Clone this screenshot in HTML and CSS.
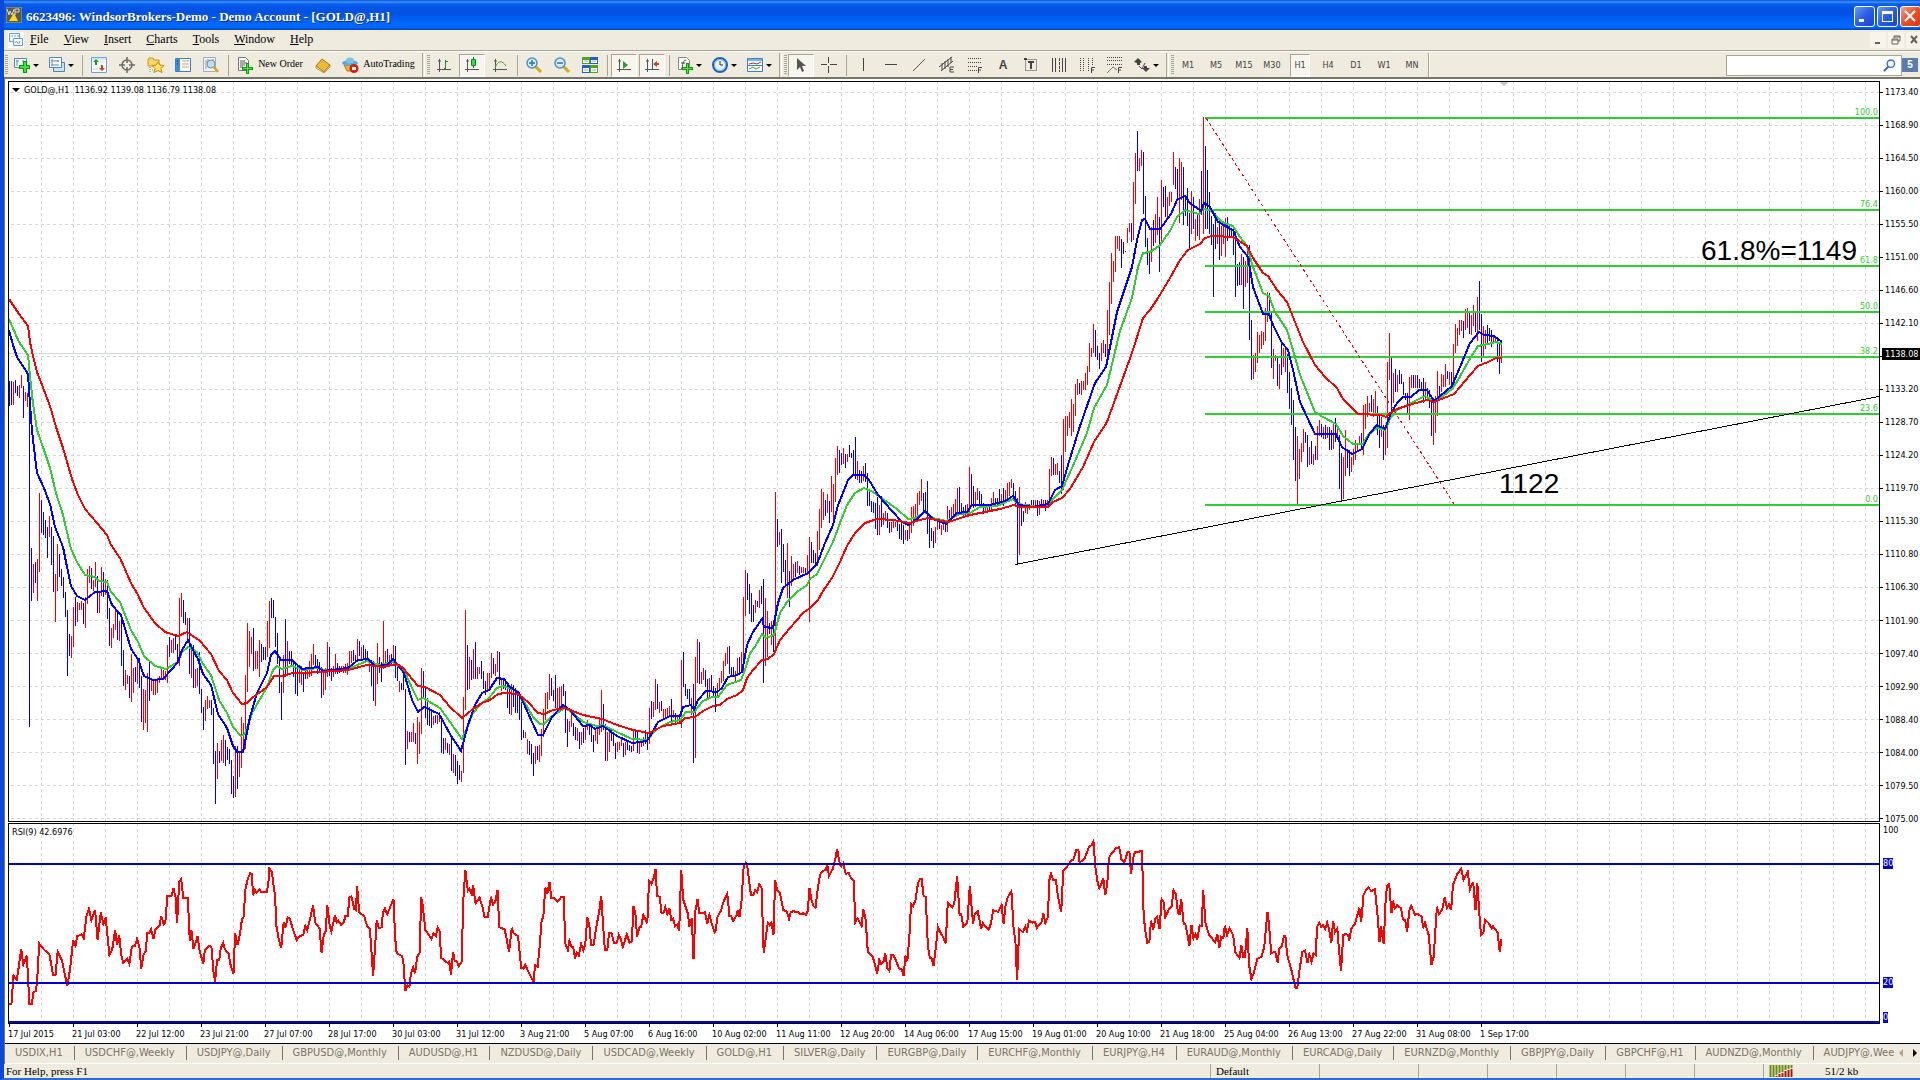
FILE: index.html
```html
<!DOCTYPE html>
<html lang="en">
<head>
<meta charset="utf-8">
<title>6623496: WindsorBrokers-Demo - Demo Account - [GOLD@,H1]</title>
<link rel="stylesheet" href="styles.css">
</head>
<body>
<div class="window">
  <header class="titlebar">
    <svg class="app-icon" viewBox="0 0 16 16"><rect width="16" height="16" fill="#5a5a4a"/><path d="M0 0h16v16H0z" fill="none" stroke="#a8a890"/><path d="M1 2l2 6 1-4 2 4 2-6M9 8V2h4v3h-4" fill="none" stroke="#dcdccc"/><path d="M8 6l4 8H3z" fill="#ffd820"/></svg>
    <h1 class="title">6623496: WindsorBrokers-Demo - Demo Account - [GOLD@,H1]</h1>
    <div class="win-buttons">
      <button class="win-btn" aria-label="Minimize"><svg viewBox="0 0 19 19"><path d="M4 12h5v3H4z" fill="#fff"/></svg></button>
      <button class="win-btn" aria-label="Maximize"><svg viewBox="0 0 19 19"><path d="M4 4h11v11H4zM5 7v7h9V7z" fill="#fff" fill-rule="evenodd"/></svg></button>
      <button class="win-btn win-close" aria-label="Close"><svg viewBox="0 0 19 19"><path d="M4 4l10 10M14 4L4 14" stroke="#fff" stroke-width="2"/></svg></button>
    </div>
  </header>

  <nav class="menubar">
    <svg class="menu-icon" viewBox="0 0 16 16"><path fill="#fff" d="M0 0h16v16H0z"/><g fill="#fff" stroke="#5b9be0"><path d="M1.500 1.500h10v8h-10z"/><path d="M5.500 6.500h9v7h-9z"/><path d="M3 4h2M7 3v2M9 4h2M7 11l1.500-2 2 3 1.500-3" fill="none"/></g></svg>
    <a class="menu" href="#"><u>F</u>ile</a>
    <a class="menu" href="#"><u>V</u>iew</a>
    <a class="menu" href="#"><u>I</u>nsert</a>
    <a class="menu" href="#"><u>C</u>harts</a>
    <a class="menu" href="#"><u>T</u>ools</a>
    <a class="menu" href="#"><u>W</u>indow</a>
    <a class="menu" href="#"><u>H</u>elp</a>
    <div class="mdi-buttons">
      <button class="mdi-btn" aria-label="Minimize chart"><svg viewBox="0 0 12 12"><path d="M3 8h5v2H3z" fill="#66645a"/></svg></button>
      <button class="mdi-btn" aria-label="Restore chart"><svg viewBox="0 0 12 12"><path d="M4 4V2h6v5H8M2 5h6v5H2zM2 6h6M4 3h6" fill="none" stroke="#66645a"/></svg></button>
      <button class="mdi-btn" aria-label="Close chart"><svg viewBox="0 0 12 12"><path d="M3 2l6 7M9 2L3 9" stroke="#66645a" stroke-width="2"/></svg></button>
    </div>
  </nav>

  <div class="toolbar">
    <i class="grip"></i>
    <button class="tool drop" aria-label="New chart"><svg viewBox="0 0 16 16"><path d="M.5 1.500h12v9H.5z" fill="#f4fafe" stroke="#4a86b8"/><path d="M3 3v6M2 4h3M9 3v2" stroke="#6a8aa0"/><path d="M9 4h4v4h3v4h-3v4H9v-4H5V8h4z" fill="#0a9a0a"/><path d="M10 5h2v4h3v2h-3v4h-2v-4H6V9h4z" fill="#3fe03f"/></svg></button>
    <button class="tool drop" aria-label="Profiles"><svg viewBox="0 0 16 16"><path d="M4.500 5.500h11v9h-11z" fill="#cfe2f2" stroke="#4a86b8"/><path d="M.5.5h12v10H.5z" fill="#f4fafe" stroke="#4a86b8"/><path d="M3 2v7M2 4h8M2 8h8M9 3v2" stroke="#6a8aa0"/></svg></button>
    <i class="sep"></i>
    <button class="tool" aria-label="Market Watch"><svg viewBox="0 0 16 16"><path d="M.5.5h15v15H.5z" fill="#fff" stroke="#6aa4dc"/><path d="M1 1h14v2H1z" fill="#d4e8fa"/><path d="M5 2l3 3H6v3H4V5H2z" fill="#18a018"/><path d="M11 14l-3-3h2V8h2v3h2z" fill="#e03a10"/><path d="M9 5h5M2 12h5" stroke="#c8d4dc"/></svg></button>
    <button class="tool" aria-label="Data Window"><svg viewBox="0 0 16 16"><circle cx="8" cy="8" r="5" fill="none" stroke="#6a6a6a" stroke-width="1.500"/><path d="M8 0v6M8 10v6M0 8h6M10 8h6" stroke="#6a6a6a" stroke-width="1.500"/></svg></button>
    <button class="tool" aria-label="Navigator"><svg viewBox="0 0 16 16"><path d="M1 2l1-1h4l1 2h5v6H1z" fill="#fbd968" stroke="#c89020"/><path d="M3 10v5M5 13h2" stroke="#888" stroke-dasharray="1 1"/><path d="M11 5l2 3 4 .5-3 3 1 4-4-2-4 2 1-4-3-3 4-.5z" fill="#ffe060" stroke="#c08a10"/></svg></button>
    <button class="tool" aria-label="Terminal"><svg viewBox="0 0 16 16"><path d="M.5 1.500h15v13H.5z" fill="#fff" stroke="#3a80c8"/><path d="M1 2h4v12H1z" fill="#3f8ade"/><path d="M7 4h7M7 7h7M7 10h7" stroke="#c89a9a"/><path d="M2 4h1M2 7h1" stroke="#123"/></svg></button>
    <button class="tool" aria-label="Strategy Tester"><svg viewBox="0 0 16 16"><path d="M.5.5h12v14H.5z" fill="#eef2f4" stroke="#9ab0c0"/><path d="M3 3v9M5 2v8M10 2v4" stroke="#8899a8"/><circle cx="8" cy="7" r="4" fill="#c0dcf2" stroke="#7890a4"/><path d="M11 10l4 5" stroke="#d8a020" stroke-width="2.500"/></svg></button>
    <i class="sep"></i>
    <button class="tool order"><svg viewBox="0 0 16 16"><path d="M1.500.5h7l3 3v10h-10z" fill="#fff" stroke="#777"/><path d="M3 4h5M3 6h7M3 8h5M3 10h3" stroke="#555"/><path d="M9 6h3v4h4v3h-4v4H9v-4H5v-3h4z" fill="#0a9a0a"/><path d="M10 7h1v4h4v1h-4v4h-1v-4H6v-1h4z" fill="#4fe84f"/></svg><span>New Order</span></button>
    <button class="tool" aria-label="MetaEditor"><svg viewBox="0 0 16 16"><path d="M1 9l6-7 8 6-6 7z" fill="#f0b838" stroke="#a87010"/><path d="M1 9l8 6 6-7v2l-6 6-8-5z" fill="#fbe8a8" stroke="#a87010" stroke-width=".7"/></svg></button>
    <button class="tool auto"><svg viewBox="0 0 16 16"><path d="M2 8h11l-2 6H5z" fill="#f0b030" stroke="#b47a10"/><ellipse cx="8" cy="6" rx="8" ry="3" fill="#5cacd8"/><ellipse cx="8" cy="3.500" rx="4" ry="3" fill="#7cc4e8"/><circle cx="12" cy="11.500" r="4.500" fill="#d82010"/><path d="M10 10h4v3h-4z" fill="#fff"/></svg><span>AutoTrading</span></button>
    <i class="group-end"></i>
    <button class="tool" aria-label="Bar chart"><svg viewBox="0 0 16 16"><path d="M3.500 2v13M1 12.500h14M2 4h3" fill="none" stroke="#555"/><path d="M9.500 3v9M8 11.500h2M10 4.500h2" fill="none" stroke="#18901c"/></svg></button>
    <button class="tool pressed" aria-label="Candlesticks"><svg viewBox="0 0 16 16"><path d="M3.500 2v13M1 12.500h14M2 4h3" fill="none" stroke="#555"/><path d="M9.500 0v11" stroke="#066"/><path d="M7.500 2.500h4v6h-4z" fill="#30e050" stroke="#0a8a1a"/></svg></button>
    <button class="tool" aria-label="Line chart"><svg viewBox="0 0 16 16"><path d="M3.500 2v13M1 12.500h14M2 4h3" fill="none" stroke="#555"/><path d="M3 11c3-8 7-8 11-2" fill="none" stroke="#3aa03a"/></svg></button>
    <i class="sep"></i>
    <button class="tool" aria-label="Zoom in"><svg viewBox="0 0 16 16"><path d="M9 9l6 6" stroke="#d8a818" stroke-width="3"/><circle cx="6" cy="6" r="5" fill="#d6ecfa" stroke="#4a90c8" stroke-width="1.500"/><path d="M3 6h6M6 3v6" stroke="#2a70a8" stroke-width="1.500"/></svg></button>
    <button class="tool" aria-label="Zoom out"><svg viewBox="0 0 16 16"><path d="M9 9l6 6" stroke="#d8a818" stroke-width="3"/><circle cx="6" cy="6" r="5" fill="#d6ecfa" stroke="#4a90c8" stroke-width="1.500"/><path d="M3 6h6" stroke="#2a70a8" stroke-width="1.500"/></svg></button>
    <button class="tool" aria-label="Tile windows"><svg viewBox="0 0 16 16"><path d="M0 0h8v7H0zM8 8h8v8H8z" fill="#4aa81a"/><path d="M8 0h8v7H8zM0 8h8v8H0z" fill="#2a5cc8"/><path d="M1 3h6v3H1zM9 3h6v3H9zM1 11h6v4H1zM9 11h6v4H9z" fill="#fff"/><path d="M2 4h4M10 4h4M2 13h4M10 13h4" stroke="#9ac"/></svg></button>
    <i class="sep"></i>
    <button class="tool pressed" aria-label="Auto scroll"><svg viewBox="0 0 16 16"><path d="M3.500 2v13M1 12.500h14M2 4h3" fill="none" stroke="#555"/><path d="M7 4l5 4-5 4z" fill="#20a030"/></svg></button>
    <button class="tool pressed" aria-label="Chart shift"><svg viewBox="0 0 16 16"><path d="M3.500 2v13M1 12.500h14M2 4h3" fill="none" stroke="#555"/><path d="M8.500 2v10" stroke="#2060a0"/><path d="M9 7l4-3v2h2v2h-2v2z" fill="#d04010"/></svg></button>
    <i class="sep"></i>
    <button class="tool drop" aria-label="Indicators"><svg viewBox="0 0 16 16"><path d="M1.500.5h8l3 3v9h-11z" fill="#fff" stroke="#888"/><path d="M4 12c2 0 1-9 5-9M4 6h4" fill="none" stroke="#444"/><path d="M9 6h3v4h4v3h-4v4H9v-4H5v-3h4z" fill="#0a9a0a"/><path d="M10 7h1v4h4v1h-4v4h-1v-4H6v-1h4z" fill="#4fe84f"/></svg></button>
    <button class="tool drop" aria-label="Periods"><svg viewBox="0 0 16 16"><circle cx="8" cy="8" r="7" fill="#e8f2fa" stroke="#1c62b8" stroke-width="2"/><circle cx="8" cy="8" r="5.500" fill="none" stroke="#7ab4e4"/><path d="M8 4v4h3" fill="none" stroke="#333"/></svg></button>
    <button class="tool drop" aria-label="Templates"><svg viewBox="0 0 16 16"><path d="M.5 1.500h15v13H.5z" fill="#fff" stroke="#3a80c8"/><path d="M1 2h14v2H1z" fill="#7ab4ec"/><path d="M2 7l4-1 4 1 4-2" fill="none" stroke="#a03020"/><path d="M1 8.500h14" stroke="#3a80c8"/><path d="M2 12l4-2 3 2 4-2" fill="none" stroke="#3a9a3a"/></svg></button>
    <i class="group-end"></i>
    <button class="tool pressed" aria-label="Cursor"><svg viewBox="0 0 16 16"><path d="M4 1v12l3-3 2 5 2-1-2-5h4z" fill="#555"/></svg></button>
    <button class="tool" aria-label="Crosshair"><svg viewBox="0 0 16 16"><path d="M7.500 0v6M7.500 9v7M0 7.500h6M9 7.500h7" stroke="#444"/></svg></button>
    <i class="sep"></i>
    <button class="tool" aria-label="Vertical line"><svg viewBox="0 0 16 16"><path d="M8.500 1v13" stroke="#444"/></svg></button>
    <button class="tool" aria-label="Horizontal line"><svg viewBox="0 0 16 16"><path d="M2 7.500h12" stroke="#444"/></svg></button>
    <button class="tool" aria-label="Trendline"><svg viewBox="0 0 16 16"><path d="M2 14L14 2" stroke="#555"/></svg></button>
    <button class="tool" aria-label="Equidistant channel"><svg viewBox="0 0 16 16"><path d="M0 10L13 0M2 14L14 4M3 6v7M6 4v8M9 2v8M12 0v6" stroke="#444"/><path d="M15 10h-4v5h4M11 12.500h3" fill="none" stroke="#444"/></svg></button>
    <button class="tool" aria-label="Fibonacci retracement"><svg viewBox="0 0 16 16"><path d="M1 1.500h14M1 5.500h14M1 9.500h9M1 13.500h9" stroke="#444" stroke-dasharray="1 1"/><path d="M15 10.500h-3.500V16M11 13h3" fill="none" stroke="#444"/></svg></button>
    <button class="tool glyph">A</button>
    <button class="tool" aria-label="Text label"><svg viewBox="0 0 16 16"><path d="M2.500 2.500h11v11h-11z" fill="none" stroke="#444" stroke-dasharray="1 1"/><path d="M5 5h6M8 5v7" stroke="#444" stroke-width="2"/><path d="M1 1h3v2H1z" fill="#444"/></svg></button>
    <button class="tool" aria-label="Cycle lines"><svg viewBox="0 0 16 16"><path d="M1.500 1v14M4.500 1v14M11.500 1v14M14.500 1v14" stroke="#444"/><path d="M8.500 1v14" stroke="#444" stroke-dasharray="3 1"/></svg></button>
    <button class="tool" aria-label="Fibonacci time zones"><svg viewBox="0 0 16 16"><path d="M1.500 1v13M4.500 1v13M9.500 1v13M13.500 1v8" stroke="#444" stroke-dasharray="1 1"/><path d="M16 10.500h-3.500V16M12 13h3" fill="none" stroke="#444"/></svg></button>
    <button class="tool" aria-label="Fibonacci fan"><svg viewBox="0 0 16 16"><path d="M0 .5h16M0 3.500h16M0 7.500h16" stroke="#444" stroke-dasharray="1 1"/><path d="M0 16l6-6 4 3" fill="none" stroke="#777"/><path d="M15 10.500h-3.500V16M11 13h3" fill="none" stroke="#444"/></svg></button>
    <button class="tool drop" aria-label="Arrows"><svg viewBox="0 0 16 16"><path d="M4 1l4 4-2 1v2H3V6L0 5zM12 15l-4-4h2V9h3v2h3z" fill="#444"/><path d="M5 9l3 3 3-6" fill="none" stroke="#444"/></svg></button>
    <i class="group-end"></i>
    <button class="tool period">M1</button>
    <button class="tool period">M5</button>
    <button class="tool period">M15</button>
    <button class="tool period">M30</button>
    <button class="tool period pressed">H1</button>
    <button class="tool period">H4</button>
    <button class="tool period">D1</button>
    <button class="tool period">W1</button>
    <button class="tool period">MN</button>
    <i class="last-end"></i>
    <div class="search">
      <input class="search-box" type="text" aria-label="Search">
      <svg class="search-icon" viewBox="0 0 14 14"><path d="M6 8l-5 5" stroke="#2a5cb8" stroke-width="2"/><circle cx="8.500" cy="5" r="4" fill="#eef6fe" stroke="#3a70d0" stroke-width="1.500"/></svg>
      <button class="badge" aria-label="Messages">5</button>
    </div>
  </div>

  <main class="workspace">
    <section class="charts">
      <div class="plot">
        <svg class="canvas" id="price" viewBox="9 82 1870 739" preserveAspectRatio="none"></svg>
        <p class="caption"><span class="caret"></span>GOLD@,H1&nbsp; 1136.92 1139.08 1136.79 1138.08</p>
        <div class="levels" id="levels"></div>
        <p class="note note-fib">61.8%=1149</p>
        <p class="note note-support">1122</p>
      </div>
      <div class="axis">
        <ol class="scale" id="scale"></ol>
        <span class="last-price">1138.08</span>
      </div>
      <div class="plot">
        <svg class="canvas" id="rsi" viewBox="9 824 1870 199" preserveAspectRatio="none"></svg>
        <p class="caption">RSI(9) 42.6976</p>
      </div>
      <div class="axis">
        <span class="mark mark-100">100</span>
        <span class="mark mark-80">80</span>
        <span class="mark mark-20">20</span>
        <span class="mark mark-0">0</span>
      </div>
      <ol class="dates" id="dates"></ol>
    </section>
    <nav class="tabs">
      <div class="tab-list">
        <a class="tab" href="#">USDIX,H1</a><a class="tab" href="#">USDCHF@,Weekly</a><a class="tab" href="#">USDJPY@,Daily</a><a class="tab" href="#">GBPUSD@,Monthly</a><a class="tab" href="#">AUDUSD@,H1</a><a class="tab" href="#">NZDUSD@,Daily</a><a class="tab" href="#">USDCAD@,Weekly</a><a class="tab" href="#">GOLD@,H1</a><a class="tab" href="#">SILVER@,Daily</a><a class="tab" href="#">EURGBP@,Daily</a><a class="tab" href="#">EURCHF@,Monthly</a><a class="tab" href="#">EURJPY@,H4</a><a class="tab" href="#">EURAUD@,Monthly</a><a class="tab" href="#">EURCAD@,Daily</a><a class="tab" href="#">EURNZD@,Monthly</a><a class="tab" href="#">GBPJPY@,Daily</a><a class="tab" href="#">GBPCHF@,H1</a><a class="tab" href="#">AUDNZD@,Monthly</a><a class="tab" href="#">AUDJPY@,Wee</a>
      </div>
      <button class="scroll scroll-left" aria-label="Scroll tabs left"></button>
      <button class="scroll scroll-right" aria-label="Scroll tabs right"></button>
    </nav>
  </main>

  <footer class="status">
    <span class="cell cell-help">For Help, press F1</span>
    <span class="cell cell-profile">Default</span>
    <span class="cell cell-wide"></span>
    <span class="cell"></span>
    <span class="cell"></span>
    <span class="cell"></span>
    <span class="cell"></span>
    <span class="cell"></span>
    <span class="cell cell-net"><svg class="net-icon" viewBox="0 0 24 12"><path d="M1.500 0v12M4.500 0v12M7.500 0v10M10.500 0v8M13.500 0v7M16.500 0v5M19.500 0v4M22.500 0v3" stroke="#6a8a10" stroke-width="2"/><path d="M7.500 11v1M10.500 9v3M13.500 8v4M16.500 6v6M19.500 5v7M22.500 4v8" stroke="#a02010" stroke-width="2"/></svg><span>51/2 kb</span></span>
  </footer>
</div>
<script src="chart.js"></script>
</body>
</html>
```
FILE: styles.css
```css
* { box-sizing: border-box; }

body {
  margin: 0;
  background: #efebde;
  color: #000;
  font-family: "DejaVu Sans Condensed", "DejaVu Sans", sans-serif;
  font-size: 9px;
}

button {
  margin: 0;
  padding: 0;
  border: 0;
  background: none;
  color: inherit;
  font: inherit;
}

a { color: inherit; text-decoration: none; }
p, ol, h1 { margin: 0; padding: 0; font-weight: normal; }
ol { list-style: none; }
svg { display: block; }

.window {
  display: flex;
  flex-direction: column;
  height: 100vh;
  overflow: hidden;
  border-left: 4px solid #0a48dc;
  border-bottom: 2px solid #2a6cd8;
}

/* Title bar */
.titlebar {
  display: flex;
  flex: none;
  align-items: center;
  gap: 4px;
  height: 30px;
  margin-left: -4px;
  padding-left: 6px;
  background: linear-gradient(#0a50d8 0, #3a94ff 2px, #0a5cec 4px, #0050e0 12px, #0060f8 20px, #006cff 27px, #0040c8 30px);
}

.app-icon { width: 16px; height: 16px; }

.title {
  flex: 1;
  padding-top: 3px;
  color: #fff;
  font: bold 13px/18px "Liberation Serif", serif;
  text-shadow: 1px 1px #0a2a80;
  white-space: nowrap;
}

.win-buttons { display: flex; gap: 2px; margin-right: -1px; padding-top: 2px; }

.win-btn {
  width: 21px;
  height: 21px;
  border: 1px solid #fff;
  border-radius: 3px;
  background: linear-gradient(135deg, #6a98f4, #2a5ce8 50%, #1a44c8);
}

.win-close { background: linear-gradient(135deg, #f4a088, #e8502c 50%, #d43a10); }

/* Menu bar */
.menubar {
  display: flex;
  flex: none;
  align-items: center;
  height: 20px;
  padding-left: 4px;
  font: 12px/18px "Liberation Serif", serif;
}

.menu-icon { width: 16px; height: 16px; margin-right: 6px; }
.menu { margin-right: 15px; padding-bottom: 2px; }
.mdi-buttons { display: flex; gap: 2px; margin-left: auto; margin-right: -2px; }
.mdi-btn { width: 16px; height: 16px; padding: 2px; background: #f8f4ec; }

/* Toolbar */
.toolbar {
  display: flex;
  flex: none;
  align-items: center;
  height: 29px;
  padding-top: 2px;
  border-top: 1px solid #a8a594;
  border-bottom: 2px solid #77746a;
  box-shadow: inset 0 1px #fff;
}

.grip, .group-end::after {
  flex: none;
  width: 3px;
  height: 20px;
  margin: 0 0 0 2px;
  background: repeating-linear-gradient(#a8a594 0 1px, transparent 1px 2px);
}

.grip { margin: 0 1px; }

.sep {
  flex: none;
  width: 6px;
  height: 21px;
  background: linear-gradient(#a8a594, #a8a594) 3px 0 / 1px 100% no-repeat;
}

.group-end { display: flex; flex: none; align-items: center; width: 10px; height: 24px; }
.group-end::before, .last-end {
  content: "";
  width: 2px;
  height: 24px;
  margin-left: 2px;
  border-left: 1px solid #a8a594;
  border-right: 1px solid #fff;
}
.group-end::after { content: ""; }

.tool {
  display: flex;
  flex: none;
  align-items: center;
  justify-content: center;
  width: 28px;
  height: 23px;
  color: #444;
}

.tool svg { flex: none; width: 16px; height: 16px; overflow: visible; }
.drop { width: 35px; gap: 3px; }
.drop::after { content: ""; border: 3px solid transparent; border-top-color: #000; border-bottom: 0; }
.order, .auto { gap: 5px; color: #000; font: 10px/14px "Liberation Serif", serif; white-space: nowrap; }
.order { width: 78px; }
.auto { width: 83px; }
.glyph { font: bold 12px/16px "Liberation Sans", sans-serif; }
.order span, .auto span { padding-bottom: 3px; }

.pressed {
  width: 26px;
  margin: 0 1px;
  border: 1px solid #a8a594;
  border-right-color: #fff;
  border-bottom-color: #fff;
  background: #f7f5ee;
}

.period.pressed { width: 20px; margin: 0 4px; }

.search { display: flex; align-items: center; margin-left: auto; margin-right: 2px; }
.search-box { width: 176px; height: 21px; border: 1px solid #a8a594; background: #fff; }
.search-icon { width: 13px; height: 13px; margin: 0 10px 0 -19px; }
.badge {
  width: 16px;
  height: 14px;
  margin-left: -4px;
  background: #5c7cb0;
  color: #fff;
  font: bold 10px/14px "Liberation Sans", sans-serif;
}

/* Charts */
.workspace {
  display: flex;
  flex: 1;
  flex-direction: column;
  min-height: 0;
  border-left: 1px solid #77746a;
}

.charts {
  display: grid;
  flex: 1;
  grid-template-columns: minmax(0, 1fr) 40px;
  grid-template-rows: minmax(0, 741fr) minmax(0, 201fr) 18px;
  row-gap: 1px;
  min-height: 0;
  padding: 2px 0 0 3px;
  border-bottom: 1px solid #000;
  background: #fff;
}

.plot { position: relative; border: 1px solid #000; }
.canvas { width: 100%; height: 100%; shape-rendering: crispEdges; }

.caption {
  position: absolute;
  top: 1px;
  left: 3px;
  display: flex;
  align-items: center;
  line-height: 14px;
  white-space: nowrap;
}

.caret { margin-right: 4px; border: 4px solid transparent; border-top-color: #000; border-bottom: 0; }

.note {
  position: absolute;
  font: 28px/28px "Liberation Sans", sans-serif;
}

.note-fib { top: 155px; right: 22px; }
.note-support { top: 388px; left: 1490px; }

.level {
  position: absolute;
  right: 1px;
  height: 9px;
  margin-top: -10px;
  background: #fff;
  color: #32cd32;
  line-height: 9px;
}

.axis { position: relative; }

.scale {
  display: flex;
  flex-direction: column;
  justify-content: space-between;
  height: 100%;
  padding-top: 5px;
}

.scale li { display: flex; align-items: center; gap: 2px; height: 12px; }
.scale li:last-child { margin-bottom: -3px; }
.scale li::before { content: ""; width: 3px; height: 1px; background: #000; }

.last-price {
  position: absolute;
  top: 36%;
  left: 2px;
  right: 0;
  height: 12px;
  padding-left: 3px;
  background: #000;
  color: #fff;
  line-height: 12px;
}

.mark { position: absolute; left: 3px; line-height: 11px; background: #0000cd; color: #fff; }
.mark-100 { top: 2px; background: none; color: #000; }
.mark-80 { top: 35px; }
.mark-20 { top: 154px; }
.mark-0 { bottom: 1px; }

.dates { display: flex; white-space: nowrap; }
.dates li { flex: 0 0 calc((100% - 2px) * 64 / 1870); line-height: 14px; }
.dates li::before { content: ""; display: block; width: 1px; height: 3px; margin: -1px 0 0 1px; background: #000; }

/* Chart tabs */
.tabs {
  display: flex;
  flex: none;
  align-items: center;
  height: 20px;
  padding-bottom: 2px;
  border-bottom: 1px solid #fff;
  background: #efebde;
  color: #77746a;
  font-size: 11px;
}

.tab-list { display: flex; flex: 1; min-width: 0; overflow: hidden; }
.tab { flex: none; padding: 0 11px 0 10px; border-right: 1px solid #77746a; line-height: 14px; white-space: nowrap; }
.tab:last-child { border: 0; padding-right: 0; }
.scroll { border: 4px solid transparent; }
.scroll-left { border-left: 0; border-right-color: #aaa798; margin-right: 10px; }
.scroll-right { border-right: 0; border-left-color: #000; margin-right: 3px; }

/* Status bar */
.status { display: flex; flex: none; height: 14px; font: 11px/12px "Liberation Serif", serif; }
.cell { flex: none; width: 69px; padding: 1px 0 0 5px; border-left: 1px solid #a8a594; white-space: nowrap; }
.cell-help { flex: 1; padding-left: 2px; border: 0; }
.cell-profile { width: 109px; }
.cell-wide { width: 99px; }
.cell-net { display: flex; width: 157px; gap: 32px; }
.net-icon { width: 24px; height: 12px; }
```
FILE: chart.js
```js
const NS = 'http://www.w3.org/2000/svg';
const LEFT = 9, RIGHT = 1879;

// One bar per hour, two pixels apart: r = up, b = down, then high-low.
const bars = [
  { x: 9, base: 280, unit: 2.904, data: 'b293-366 b293-362 r296-362 b290-327 b308-336 r305-343 r276-314 b308-401 r325-350 r328-368 b312-1298 b778-932 r825-908 b819-880 r810-932 r618-848 b639-735 b674-740 b697-749 b717-807 r685-746 b717-828 b743-906 r854-993 r767-903 b796-862 b839-889 b862-923 b906-979 b958-1150 b1028-1092 r1034-1098 r950-1066 b921-1005 r935-993 r938-958 r932-958 b938-999 r921-1010 r839-941 r830-880 b836-897 r870-903 r819-892 b860-967 r903-967 r833-918 b848-920 r868-914 b870-984 b952-1063 r1010-1069 r999-1040 r955-1016 b960-1045 r990-1048 b973-1121 b1074-1179 r1132-1191 r1147-1173 b1150-1214 r1086-1225 r1127-1199 b1124-1167 r1106-1173 b1098-1185 b1150-1284 r1188-1307 r1190-1286 r1141-1312 b1109-1222 r1158-1193 r1165-1205 r1165-1205 r1155-1199 r1150-1170 r1129-1156 r1132-1160 r1135-1162 r1060-1170 b1037-1095 r1045-1083 r1039-1083 b1034-1074 b1057-1112 r923-1121 r909-979 b929-996 b964-1002 r981-1050 b981-1144 r1057-1156 b1060-1185 r1130-1185 r1128-1179 b1080-1202 b1188-1257 b1240-1307 r1220-1281 r1208-1246 r1220-1243 b1220-1263 b1243-1405 b1368-1522 r1344-1449 b1368-1402 r1336-1397 r1321-1402 b1336-1411 b1356-1394 b1362-1405 b1394-1493 b1440-1504 r1353-1501 b1353-1478 r1370-1443 r1269-1417 r1286-1365 r1147-1362 r996-1196 r1019-1124 r1037-1086 b1010-1135 r1077-1130 r1077-1130 r1045-1153 b1057-1109 b1066-1103 b1066-1103 r990-1095 r932-1069 b923-981 b929-981 b979-1066 b1025-1115 b1103-1199 b1167-1278 r1089-1199 b984-1152 r1048-1147 b1077-1115 b1077-1124 b1105-1153 b1112-1202 b1121-1208 r1130-1170 r1121-1175 b1141-1196 b1124-1160 r1127-1160 r1106-1153 r1086-1150 r1057-1117 b1089-1130 b1101-1144 b1109-1141 b1124-1214 r1135-1205 r1127-1191 r1051-1153 b1066-1150 b1127-1164 r1121-1152 r1086-1144 b1112-1144 b1120-1142 r1120-1138 r1122-1140 r1115-1140 r1112-1147 r1077-1130 r1077-1112 b1074-1106 b1089-1112 r1042-1103 b1048-1092 r1066-1100 b1060-1103 b1071-1106 b1077-1110 r1100-1138 b1103-1179 b1106-1222 r1121-1237 r1054-1173 b1095-1141 b1109-1167 r990-1130 r1077-1127 b1071-1121 r1089-1118 b1086-1118 r1060-1115 b1063-1156 b1121-1164 r1164-1196 b1170-1190 b1130-1190 b1188-1408 r1310-1362 b1312-1341 r1312-1341 r1286-1341 b1315-1347 r1269-1405 r1283-1376 r1127-1318 b1135-1210 b1179-1272 b1214-1292 b1240-1295 b1254-1301 r1266-1292 b1263-1286 r1263-1289 r1255-1285 b1266-1373 b1330-1376 r1330-1365 b1345-1373 r1347-1379' },
  { x: 451, base: 480, unit: 3, data: 'b770-873 r822-879 b825-888 b843-912 b855-900 r873-906 r651-879 r390-690 b495-630 r531-627 b540-600 r507-597 b486-597 r561-597 r561-582 b543-597 b573-627 b603-645 r579-630 r579-630 r519-594 b534-582 r552-588 r513-576 b516-615 r594-633 b594-627 b597-630 b606-684 b615-702 r612-705 b615-681 b624-699 b630-699 b636-720 b666-780 b750-774 r756-774 r777-822 b783-825 b792-852 b819-888 r798-852 b798-840 r795-846 r747-828 r687-771 r639-720 r636-687 r582-660 b594-648 b630-663 b585-684 r624-685 r621-681 r618-675 b612-648 b633-759 b717-801 r723-756 r690-741 b730-768 b741-780 r744-783 b756-807 r756-795 b744-789 r735-780 r720-750 b732-765 b738-786 b765-816 r747-783 r745-792 r711-765 r630-756 b672-750 b732-843 r756-843 r747-816 b750-783 b765-798 b789-837 r786-816 r786-810 r777-798 b789-831 r786-825 b785-810 b795-812 b798-816 r747-813 b750-777 b756-819 r786-822 r777-801 r771-798 b750-792 b762-810 r684-792 b663-717 r666-711 r597-690 b612-687 r666-699 b663-693 r687-717 r687-717 r684-711 r678-711 b657-726 r690-714 b699-729 r708-730 b702-732 r540-744 b516-621 b612-648 b627-657 b627-675 r654-705 b612-849 r531-834 r477-609 b486-612 r576-612 r564-600 b570-621 b597-657 r594-657 b585-633 b618-651 b624-696 r609-651 r594-630 r573-609 r543-603 r519-558 r501-552 b498-582 b561-588 b561-588 r573-603 r534-582 b531-579 r516-576 r351-576 r270-408 b279-360 b312-402 b339-426 b375-426 r360-399 b363-381 r330-384 b318-372 b297-609 r354-558 r393-531 b429-462 r423-495 b435-516 r36-519 b117-201 r156-195 b147-309 b192-276 b240-318 r189-354 b273-381 r228-318 r252-300 b246-291 r243-279 b258-285 r261-279 r261-279 b264-282 r225-285 r171-426 b186-249 b210-249 b219-255 r153-258 r87-210 r27-144 r36-120 b60-108 r42-99 b63-129' },
  { x: 831, base: 430, unit: 3, data: 'r138-246 r162-285 r84-216 r48-135 b60-129 b69-105 r54-102 b72-114 r72-96 b45-81 b69-84 b60-132 b21-147 r93-150 b120-160 b123-159 r108-153 b99-156 b129-228' },
  { x: 869, base: 480, unit: 3, data: 'b36-78 b63-97 b66-98 b69-147 b51-165 r75-165 b48-141 r99-135 r93-120 b99-144 b126-159 r126-156 r120-144 r126-140 b126-153 b132-177' },
  { x: 901, base: 100, unit: 3, data: 'b1265-1320 b1275-1332 r1290-1320 b1290-1323 r1272-1317 r1221-1299 r1218-1278 r1212-1266 r1179-1245 r1173-1215 r1137-1203 b1179-1233 b1176-1242 b1143-1302 b1254-1344 b1284-1323 b1293-1344 r1281-1329 r1260-1290 b1260-1287 r1275-1305 r1272-1290 b1260-1296 r1218-1296 b1230-1269 r1221-1257 r1212-1248 r1197-1248 r1164-1242 b1161-1239 b1209-1242 b1221-1254 b1215-1248 r1212-1245 r1101-1245 b1122-1218 b1158-1224 r1176-1221 r1164-1200 b1173-1215 b1182-1224 b1209-1242 r1212-1239 r1212-1233 b1212-1233 r1194-1233 r1176-1218 b1194-1218 b1194-1216 b1167-1218 r1182-1212 b1164-1218 r1170-1209 r1149-1194 r1146-1188 r1137-1164 b1149-1194 b1173-1221 b1194-1392 r1161-1365 b1221-1278 b1233-1266 r1206-1239 r1212-1242 r1212-1230 b1200-1218 b1200-1221 r1200-1218 b1200-1248 r1203-1245 b1197-1218 r1200-1221 b1200-1233 r1200-1221 r1107-1218 r1071-1128 b1074-1125 r1092-1125 r1089-1125 b1113-1149 b1065-1182 r957-1170 r948-1056 r948-1008 r936-984 r897-1008 r912-996 r852-948 r837-885 b849-882 r843-885 r843-870 r819-870 r798-855 r729-816 r744-771 r672-759 b690-771 b738-780 b759-807 r729-783 r720-759 b732-771 r630-768 r546-705 r459-612 r483-546 r408-516 r408-447 r408-453 b417-504 b426-462 b453-456 r384-429 r369-396 b369-426 r246-420 r159-312 b93-213 r174-213 r150-198 b156-342 b288-441 b414-495 b459-522 r381-486 b360-438 r342-429 r291-405 b351-516 r240-423 b261-321 b258-351 r291-351 r276-318 r276-306 r156-255 b201-267 b207-300 r174-369 r186-300 b201-375 b288-348 b264-378 b339-450 r273-402 b291-387 r357-423 b345-408 r297-420 b213-345 r51-402 b138-387 b210-387 b276-402 b348-435 b372-591 b339-447 r381-432 b354-480 r378-468 r372-432 r354-471 b351-423 b378-411 b384-411 b390-465 b396-591 b492-558 b486-555 r462-555 b471-627 r483-561 r435-549 b435-720 b660-840 r765-837 r759-816 r696-789 r705-759 r693-747 r696-735 r624-723 r576-666 b579-657 b636-804 r747-837 r765-783 b768-858 r792-867 b720-825 r744-801 r747-816 b762-879 b816-927 b864-975 b900-1080 b981-1143 r1008-1215 r1047-1137 r1029-1086 r987-1056 b996-1029 b1005-1101 r1041-1095 b1023-1092 r1062-1095 b1038-1080 r978-1080 r960-1008 b972-1011 r981-1017 b975-1017 r981-1014 b981-1050 b990-1050 r969-1047 b954-1026 r975-1020 b1005-1167 b1059-1203 r1071-1197 r990-1128 b1047-1104 b1050-1128 r1071-1116 r1047-1095 r1020-1080 r1029-1050 r1008-1035 b999-1047 r915-1065 r912-987 r888-951 r909-936 b885-936 r897-951 r873-948 b918-1005 b945-1044' },
  { x: 1381, base: 180, unit: 3, data: 'r712-770 b735-840 r745-825 r545-805 r459-600 b528-700 r580-670 b567-637 r585-636 b570-612 b582-612 b606-645 b640-660 b640-700 r590-720 r585-624 b586-624 r585-624 b586-624 b597-625 b605-627 b594-668 r606-660 b625-655 b630-683 b650-768 r655-795 r648-760 r573-707 b618-654 r582-637 r585-620 r552-620 b573-597 r576-615 b576-615 r492-618 r432-520 r444-498 r420-465 r420-453 b423-474 r387-450 r384-444 b396-462 r405-465 r375-438 b396-456 r351-483 b303-450 b402-546 r438-532 r450-507 b435-492 b444-483 b450-501 r465-489 r468-490 b474-546 b490-582 r495-549' }
];

const averages = [
  ['#32cd32', '9,319 19,342 28,355 30,376 33,404 37,430 44,450 50,468 56,493 63,515 71,549 77,562 85,575 95,577 99,581 107,582 111,592 120,602 131,630 138,642 144,656 155,666 166,669 178,662 182,652 188,647 197,652 203,664 211,675 219,700 227,713 233,727 241,736 245,734 252,713 267,687 273,670 277,666 282,669 292,666 303,670 318,668 325,670 348,669 367,661 380,665 393,662 404,670 412,688 418,700 423,698 440,708 450,722 462,739 467,728 473,713 482,703 489,698 497,688 503,686 517,691 525,703 533,717 540,724 544,724 552,716 565,708 573,713 583,722 597,726 603,725 617,732 632,739 647,740 657,729 670,722 680,720 686,712 694,712 703,701 712,697 718,697 727,685 741,680 745,670 750,653 755,647 762,634 766,638 774,635 780,613 787,602 797,592 807,585 810,579 817,574 825,558 833,542 840,523 847,505 855,493 864,488 873,492 883,499 897,509 908,519 915,518 925,512 933,518 946,521 960,514 970,513 980,507 997,506 1013,499 1018,504 1033,506 1048,505 1055,497 1062,490 1072,468 1087,433 1094,408 1107,385 1120,331 1132,298 1138,267 1143,253 1150,252 1159,246 1170,231 1177,217 1185,210 1199,214 1203,209 1210,210 1222,222 1233,226 1240,237 1247,246 1253,267 1263,293 1269,296 1275,312 1287,330 1293,350 1300,375 1315,412 1323,417 1336,424 1343,436 1353,444 1363,444 1368,435 1377,428 1385,430 1391,417 1397,410 1411,403 1425,396 1432,400 1438,400 1452,389 1458,380 1468,362 1478,346 1488,344 1496,342 1502,344'],
  ['#0000ff', '9,330 13,345 17,357 28,374 30,404 32,431 37,473 44,488 50,504 55,527 63,547 66,562 71,586 77,596 85,600 95,592 107,591 112,605 121,615 131,649 138,659 144,676 153,680 163,679 172,669 178,662 182,650 188,640 193,650 198,659 203,674 211,685 218,714 227,728 233,746 237,752 243,752 250,717 257,693 267,673 271,655 275,651 281,660 292,660 302,669 318,667 323,671 348,668 358,660 368,659 375,666 387,665 393,659 404,673 412,700 418,712 424,707 439,714 450,734 461,751 468,725 475,705 482,693 489,690 497,678 504,679 510,687 519,693 528,713 538,735 543,735 552,717 563,705 570,710 583,726 590,725 595,729 603,726 617,736 632,743 647,741 652,733 658,722 670,716 680,716 683,707 691,705 694,710 698,700 706,691 717,692 722,688 728,677 737,675 742,672 747,645 753,632 762,619 764,627 773,628 778,603 783,588 793,580 808,573 817,564 825,543 833,525 838,505 841,498 848,480 853,475 864,475 869,480 878,495 892,511 902,522 908,525 917,519 925,511 933,519 946,524 957,513 967,512 972,505 990,505 1005,501 1013,496 1019,505 1033,507 1048,504 1055,490 1062,486 1068,465 1080,426 1095,383 1106,367 1117,312 1132,267 1137,240 1142,220 1145,219 1150,229 1160,229 1171,214 1177,200 1185,196 1190,203 1201,211 1204,203 1210,207 1218,222 1233,230 1240,247 1248,257 1253,287 1263,314 1269,314 1273,325 1282,343 1288,350 1293,370 1300,402 1315,434 1336,434 1342,447 1352,454 1362,449 1370,433 1377,425 1385,429 1391,413 1397,403 1403,397 1411,397 1419,390 1427,390 1434,401 1452,386 1460,367 1470,343 1479,332 1484,335 1494,336 1502,342'],
  ['#ff0000', '9,299 19,314 28,326 30,342 33,356 37,372 44,390 50,406 56,427 63,448 72,479 78,495 85,509 97,523 107,535 111,545 120,558 131,583 138,595 144,608 155,623 165,632 178,636 187,632 200,641 211,654 219,671 227,680 233,693 242,704 247,703 252,698 267,687 274,676 283,676 293,673 305,673 320,672 348,670 367,665 383,667 397,664 403,668 418,686 425,687 440,695 450,707 462,718 473,709 482,703 490,700 498,694 505,693 518,694 528,702 538,713 544,714 553,710 565,708 583,715 602,719 617,725 633,730 649,733 663,726 680,723 685,718 695,717 703,711 713,706 720,705 727,699 737,695 743,690 747,678 753,670 762,660 768,659 774,654 780,640 790,628 803,613 810,608 818,600 823,591 832,578 840,562 847,546 855,533 865,523 877,519 893,520 910,523 920,520 928,518 937,520 948,522 970,515 1000,509 1014,505 1020,507 1048,507 1053,502 1062,498 1070,489 1083,467 1094,442 1107,422 1120,386 1132,353 1143,318 1150,310 1158,298 1170,278 1180,260 1188,250 1200,244 1205,238 1212,236 1233,237 1247,246 1253,258 1263,273 1268,276 1277,290 1287,302 1293,317 1303,342 1315,365 1325,377 1337,388 1343,399 1358,414 1381,415 1386,417 1390,413 1397,409 1409,405 1427,400 1434,402 1444,398 1454,394 1460,387 1470,375 1478,366 1488,362 1496,358 1502,358']
];

const rsi = [
  { x: 0, unit: 2.45, data: '22,613 28,613 33,527 41,540 46,500 52,447 57,494 66,467 72,612 78,612 82,577 88,573 91,545 96,431 108,449 121,463 130,525 136,525 141,455 152,482 165,558 172,505 179,420 185,437 189,409 200,403 205,414 212,348 218,327 224,360 233,330 239,420 247,337 253,372 259,352 268,465 275,449 282,390 287,436 292,406 297,465 302,488 312,476 317,491 323,440 331,437 336,417 342,445 346,507 352,463 357,454 361,400 366,400 370,388 376,416 381,388 391,376 395,348 401,373 405,370 410,289 420,289 425,264 430,292 434,369 439,245 444,237 449,294 460,294 465,423 469,391 474,447 484,409 489,452 498,491 502,450 512,437 518,440 523,515 527,545 532,480 537,480 541,443 547,429 551,448 560,461 565,495 572,522 576,400 582,436 588,400 593,357 597,350 601,270 607,236 613,220 617,222 620,286 624,270 629,278 636,268 640,276 654,276 658,240 660,206 666,215 674,290 677,376 683,418 689,444 695,366 699,384 705,352 710,356 717,386 727,420 735,408 743,405 748,378 753,390 760,355 767,315 772,367 783,386 788,460 793,405 798,393 802,314 808,378 812,394 821,345 825,368 829,362 836,375 842,368 846,349 852,347 856,292 861,289 868,327 872,330 875,257 880,337 892,348 900,380 906,387 910,450 914,528 920,420 923,360 928,384 935,382 938,338 943,325 949,343 957,318 964,298 968,412 972,460 985,468 988,482 993,573 998,556 1003,560 1007,520 1012,502 1017,520 1022,471 1028,458 1032,292 1036,320 1042,390 1057,416 1062,400 1068,407 1072,382 1077,394 1081,474 1098,490 1101,485 1105,526 1110,455 1114,484 1118,482 1124,498 1131,486 1135,300 1140,209 1146,272 1150,266 1156,283 1159,254 1165,310 1175,293 1182,320 1187,350 1195,350 1203,290 1208,314 1214,302 1219,270 1223,382 1236,388 1240,408 1247,456 1254,383 1258,400 1269,408 1277,504 1282,506 1287,494 1293,512 1307,545 1311,496 1317,500 1322,440 1327,362 1331,350 1336,263 1341,282 1346,245 1351,294 1358,295 1366,306 1376,290 1381,291 1385,430 1391,450 1395,423 1400,440 1404,440 1409,477 1413,458 1418,466 1424,432 1429,450 1434,432 1439,352 1444,376 1448,434 1454,435 1460,390 1464,360 1469,327' },
  { x: 600, unit: 2.45, data: '3,287 9,400 12,450 18,450 22,400 28,398 34,428 41,428 46,405 51,417 56,441 66,402 72,428 78,425 82,318 87,345 91,411 97,380 101,380 106,346 116,370 120,243 126,252 132,233 136,206 140,288 146,290 151,340 156,338 160,321 165,342 170,324 175,361 179,357 184,379 189,374 194,393 199,209 204,300 215,340 219,380 225,355 229,478 234,330 239,297 243,340 257,337 263,370 268,345 274,371 282,400 288,350 297,330 303,303 312,281 317,347 321,347 326,363 336,343 337,330 342,350 347,300 352,200 357,188 361,199 365,240 370,286 376,285 380,271 385,277 390,252 396,264 401,460 411,368 416,376 420,368 425,405 429,239 434,269 441,280 449,330 458,335 463,357 467,337 475,333 480,337 486,335 490,343 498,340 504,345 509,333 513,263 518,300 523,318 528,323 533,270 539,225 545,213 553,210 557,195 561,227 570,207 576,180 581,147 588,195 591,200 596,190 602,222 609,218 615,235 622,244 625,367 631,355 641,378 645,326 651,360 656,455 668,470 675,500 679,522 684,480 689,491 695,484 699,459 704,504 709,513 713,464 719,465 733,505 739,508 744,528 748,467 753,484 758,410 762,311 767,318 773,300 779,250 784,236 788,237 793,289 798,290 803,435 808,474 812,474 817,498 823,440 828,381 835,400 841,412 847,430 852,308 863,322 868,310 875,228 881,345 885,342 890,381 900,368 906,258 914,371 918,342 925,333 929,356 934,387 938,370 952,390 958,370 963,331 975,335 984,316 989,373 993,320 998,295 1008,273 1013,380 1018,430 1022,541 1027,386 1036,397 1042,379 1046,393 1051,362 1060,368 1066,366 1070,384 1083,364 1086,340 1091,369 1097,352 1101,240 1105,221 1110,240 1117,240 1122,290 1130,335 1135,212 1141,206 1153,184 1160,178 1167,150 1172,150 1175,188 1187,177 1198,140 1205,135 1209,125 1213,195 1219,246 1223,264 1228,253 1233,234 1238,286 1243,250 1247,175 1252,161 1257,157 1263,145 1272,141 1278,180 1285,187 1292,158 1297,155 1301,222 1306,175 1311,155 1320,157 1325,152 1328,153 1332,350 1337,400 1341,428 1346,425 1350,362 1355,388 1361,355 1365,350 1371,388 1376,298 1381,307 1385,352 1395,325 1401,318 1405,271 1411,282 1416,340 1420,342 1424,296 1430,373 1434,373 1439,401 1444,438 1449,374 1454,415 1459,402 1463,420 1469,376' },
  { x: 1200, unit: 2.178, data: '4,378 7,270 12,370 20,405 33,427 38,402 42,445 46,410 51,414 54,377 59,405 64,385 72,405 77,458 86,474 90,435 94,470 98,470 103,383 107,495 112,537 117,520 125,476 134,470 140,440 147,335 150,370 155,460 164,455 169,488 173,445 178,440 183,408 186,408 190,465 199,510 208,565 212,565 216,515 223,455 229,452 234,489 238,463 243,485 247,460 252,465 255,380 260,368 264,380 268,375 273,387 277,368 281,385 286,430 290,362 294,397 299,385 302,440 307,513 312,405 318,402 323,405 325,423 329,387 338,370 347,323 351,366 356,285 362,268 367,263 373,273 381,268 387,350 391,427 394,378 400,433 404,310 407,257 412,252 417,340 420,302 424,325 429,316 438,325 442,358 447,361 451,396 456,330 460,318 469,345 474,341 483,350 486,385 490,368 498,405 504,495 509,470 516,320 520,343 527,330 533,293 538,323 542,312 547,330 551,255 560,223 569,206 574,240 583,215 588,268 595,246 600,330 604,248 608,335 612,405 617,400 621,360 628,368 635,385 638,378 648,397 653,457 656,417' }
];

const levels = [[118, '100.0'], [210, '76.4'], [266, '61.8'], [312, '50.0'], [357, '38.2'], [414, '23.6'], [505, '0.0']];
const prices = ['1173.40', '1168.90', '1164.50', '1160.00', '1155.50', '1151.00', '1146.60', '1142.10', '', '1133.20', '1128.70', '1124.20', '1119.70', '1115.30', '1110.80', '1106.30', '1101.90', '1097.40', '1092.90', '1088.40', '1084.00', '1079.50', '1075.00'];
const dates = ['17 Jul 2015', '21 Jul 03:00', '22 Jul 12:00', '23 Jul 21:00', '27 Jul 07:00', '28 Jul 17:00', '30 Jul 03:00', '31 Jul 12:00', '3 Aug 21:00', '5 Aug 07:00', '6 Aug 16:00', '10 Aug 02:00', '11 Aug 11:00', '12 Aug 20:00', '14 Aug 06:00', '17 Aug 15:00', '19 Aug 01:00', '20 Aug 10:00', '21 Aug 18:00', '25 Aug 04:00', '26 Aug 13:00', '27 Aug 22:00', '31 Aug 08:00', '1 Sep 17:00'];

function draw(svg, tag, attrs) {
  const el = document.createElementNS(NS, tag);
  for (const name in attrs) el.setAttribute(name, attrs[name]);
  svg.appendChild(el);
}

function line(svg, d, stroke, width, extra) {
  draw(svg, 'path', Object.assign({ d, stroke, 'stroke-width': width, fill: 'none' }, extra));
}

function verticalGrid(svg, top, bottom) {
  let d = '';
  for (let x = 41; x < RIGHT; x += 32) d += `M${x + 0.5} ${top}V${bottom}`;
  line(svg, d, '#d3d6d6', 1, { 'stroke-dasharray': '3 3', 'stroke-dashoffset': 1 });
}

const price = document.getElementById('price');
verticalGrid(price, 82, 821);
let rows = '';
for (let y = 92; y < 821; y += 33) rows += `M${LEFT} ${y + 0.5}H${RIGHT}`;
line(price, rows, '#d3d6d6', 1, { 'stroke-dasharray': '3 3', 'stroke-dashoffset': 4 });
line(price, `M${LEFT} 353.5H${RIGHT}`, '#d3d6d6', 1);
draw(price, 'path', { d: 'M1500 82h8l-4 5z', fill: '#c8cccc' });

const paths = { r: '', b: '' };
for (const run of bars) {
  run.data.split(' ').forEach((bar, i) => {
    const [high, low] = bar.slice(1).split('-').map(v => Math.round(run.base + v / run.unit));
    paths[bar[0]] += `M${run.x + 2 * i + 0.5} ${high}V${low}`;
  });
}
line(price, paths.r, '#f00000', 1);
line(price, paths.b, '#0000f0', 1);
line(price, levels.map(([y]) => `M1205 ${y}H${RIGHT}`).join(''), '#32cd32', 2);
for (const [colour, points] of averages) line(price, 'M' + points.split(' ').join('L'), colour, 2);
line(price, 'M1206 118L1454 504', '#f00000', 1, { 'stroke-dasharray': '3 3' });
line(price, 'M1015 564.500L1879 396.500', '#000', 1);

const rsiSvg = document.getElementById('rsi');
verticalGrid(rsiSvg, 824, 1023);
const points = rsi.flatMap(run => run.data.split(' ').map(p => {
  const [x, y] = p.split(',');
  return `${(run.x + x / run.unit).toFixed(1)} ${(800 + y / 3).toFixed(1)}`;
}));
line(rsiSvg, 'M' + points.join('L'), '#ff0000', 2);
line(rsiSvg, `M${LEFT} 864H${RIGHT}M${LEFT} 983H${RIGHT}M${LEFT} 1022H${RIGHT}`, '#0000cd', 2);

document.getElementById('levels').innerHTML = levels.map(([y, text]) => `<span class="level" style="top:${((y - 82) / 7.39).toFixed(2)}%">${text}</span>`).join('');
document.getElementById('scale').innerHTML = prices.map(p => `<li>${p}</li>`).join('');
document.getElementById('dates').innerHTML = dates.map(d => `<li>${d}</li>`).join('');
```
